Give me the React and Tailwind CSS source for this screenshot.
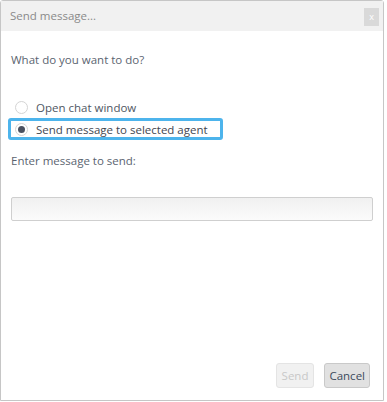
export default function App() {
  return (
    <div className="w-[387px] h-[402px] bg-white" style={{ fontFamily: '"Open Sans", "Noto Sans", sans-serif' }}>
      <div className="w-[384px] h-[401px] border border-[#c6c6c6] rounded-t-[3px] flex flex-col bg-white">
        {/* header */}
        <div className="h-[30px] bg-[#f1f1f1] flex items-center justify-between pl-[9px] pr-[4px] shrink-0">
          <span className="text-[11.5px] text-[#8a8a8a]">Send message...</span>
          <button className="w-[15px] h-[18px] mt-[1px] bg-[#d9d9d9] text-white text-[9px] leading-none flex items-center justify-center">x</button>
        </div>

        <div className="flex-1 flex flex-col px-[10px]">
          <p className="text-[11.5px] text-[#5b6470] mt-[20px]">What do you want to do?</p>

          <div className="mt-[28px] flex flex-col">
            <label className="flex items-center h-[22px] pl-[4px] gap-[8px] text-[11.5px] text-[#4f5763]">
              <span className="w-[13px] h-[13px] rounded-full border border-[#d4d4d4] bg-white" />
              Open chat window
            </label>
            <label className="-ml-[3px] w-[215px] flex items-center h-[22px] pl-[4px] gap-[8px] text-[11.5px] text-[#3f4650] border-[3px] border-[#4db4ec] rounded-[3px]">
              <span className="w-[13px] h-[13px] rounded-full border border-[#d4d4d4] bg-white flex items-center justify-center">
                <span className="w-[7px] h-[7px] rounded-full bg-[#4a5160]" />
              </span>
              Send message to selected agent
            </label>
          </div>

          <p className="text-[11.5px] text-[#5b6470] mt-[12px]">Enter message to send:</p>

          <input className="mt-[27px] h-[24px] w-full border border-[#cfcfcf] rounded-[2px] bg-gradient-to-b from-[#f0f0f0] to-[#fbfbfb] outline-none" />

          <div className="mt-auto mb-[12px] flex justify-end gap-[10px] pr-[3px]">
            <button className="h-[25px] px-[5px] text-[11.5px] text-[#c8c8c8] bg-[#f1f1f1] border border-[#e4e4e4] rounded-[3px]">Send</button>
            <button className="h-[25px] px-[4px] text-[11.5px] text-[#3c4a5c] bg-[#e1e1e1] border border-[#c9c9c9] rounded-[3px]">Cancel</button>
          </div>
        </div>
      </div>
    </div>
  );
}
